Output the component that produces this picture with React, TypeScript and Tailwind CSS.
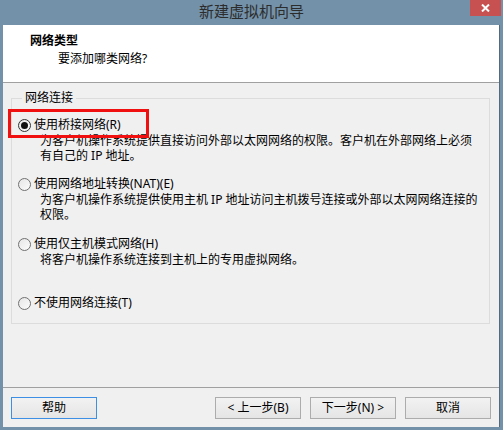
import React from "react";

const FONT = { fontFamily: '"Noto Sans", "Noto Sans CJK SC", sans-serif' };

interface Option {
  label: string;
  desc: string[];
  checked?: boolean;
  height: string;
}

const OPTIONS: Option[] = [
  {
    label: "使用桥接网络(R)",
    desc: [
      "为客户机操作系统提供直接访问外部以太网网络的权限。客户机在外部网络上必须",
      "有自己的 IP 地址。",
    ],
    checked: true,
    height: "h-[59px]",
  },
  {
    label: "使用网络地址转换(NAT)(E)",
    desc: [
      "为客户机操作系统提供使用主机 IP 地址访问主机拨号连接或外部以太网网络连接的",
      "权限。",
    ],
    height: "h-[60px]",
  },
  {
    label: "使用仅主机模式网络(H)",
    desc: ["将客户机操作系统连接到主机上的专用虚拟网络。"],
    height: "h-[59px]",
  },
  {
    label: "不使用网络连接(T)",
    desc: [],
    height: "h-[20px]",
  },
];

function Radio({ checked }: { checked?: boolean }) {
  return (
    <div
      className={
        "w-[13px] h-[13px] rounded-full border shrink-0 flex items-center justify-center bg-gradient-to-br from-[#e6e6e6] to-[#fcfcfc] " +
        (checked ? "border-[#333333]" : "border-[#707070]")
      }
    >
      {checked && <div className="w-[7px] h-[7px] rounded-full bg-[#111111]" />}
    </div>
  );
}

function Button({ children, focused }: { children: React.ReactNode; focused?: boolean }) {
  return (
    <div
      className={
        "w-[86px] h-[22px] flex items-center justify-center text-[12px] leading-[16px] text-black bg-gradient-to-b from-[#f2f2f2] to-[#e5e5e5] border " +
        (focused ? "border-[#3c8fe4]" : "border-[#acacac]")
      }
    >
      {children}
    </div>
  );
}

export default function App() {
  return (
    <div className="relative w-[503px] h-[430px] bg-[#7391a9] flex flex-col overflow-hidden" style={FONT}>
      {/* Title bar */}
      <div className="relative h-[25px] shrink-0 flex items-center justify-center">
        <span className="text-[15px] leading-[18px] text-[#2c2c2c] -mt-[3px]">新建虚拟机向导</span>
        <div className="absolute top-0 right-[2px] w-[31px] h-[16px] bg-[#c75050] flex items-center justify-center">
          <svg width="9" height="8" viewBox="0 0 9 8">
            <path d="M1 0.5 L8 7.5 M8 0.5 L1 7.5" stroke="#ffffff" strokeWidth="2" />
          </svg>
        </div>
      </div>

      {/* Window body */}
      <div className="flex-1 ml-[3px] mr-[3px] mb-[3px] flex flex-col bg-[#f0f0f0] border-r border-[#556a7a]">
        {/* Header */}
        <div className="h-[58px] shrink-0 bg-white border-b border-[#a0a0a0] pt-[8px]">
          <div className="pl-[27px] text-[12px] leading-[16px] font-bold text-black">网络类型</div>
          <div className="pl-[55px] mt-[2px] text-[12px] leading-[16px] text-black">要添加哪类网络?</div>
        </div>

        {/* Group box */}
        <fieldset className="mt-[7px] ml-[8px] mr-[9px] h-[234px] border border-[#dcdcdc] pl-[6px] pt-[11px]">
          <legend className="ml-[4px] px-[3px] text-[12px] leading-[16px] text-black">网络连接</legend>
          {OPTIONS.map((opt) => (
            <div key={opt.label} className={"flex flex-col " + opt.height}>
              <div className="flex items-center gap-[3px] h-[16px]">
                <Radio checked={opt.checked} />
                <span className="text-[12px] leading-[16px] text-black whitespace-nowrap">{opt.label}</span>
              </div>
              {opt.desc.map((line) => (
                <div key={line} className="pl-[22px] text-[12px] leading-[15px] text-black whitespace-nowrap">
                  {line}
                </div>
              ))}
            </div>
          ))}
        </fieldset>

        <div className="flex-1" />

        {/* Footer */}
        <div className="border-t border-[#a0a0a0] h-[40px] shrink-0 flex items-center px-[8px] pt-[1px]">
          <Button focused>帮助</Button>
          <div className="flex-1" />
          <div className="flex gap-[9px]">
            <Button>&lt; 上一步(B)</Button>
            <Button>下一步(N) &gt;</Button>
            <Button>取消</Button>
          </div>
        </div>
      </div>

      {/* Red annotation box */}
      <div className="absolute left-[8px] top-[109px] w-[141px] h-[29px] border-[3px] border-[#f01010]" />
    </div>
  );
}
